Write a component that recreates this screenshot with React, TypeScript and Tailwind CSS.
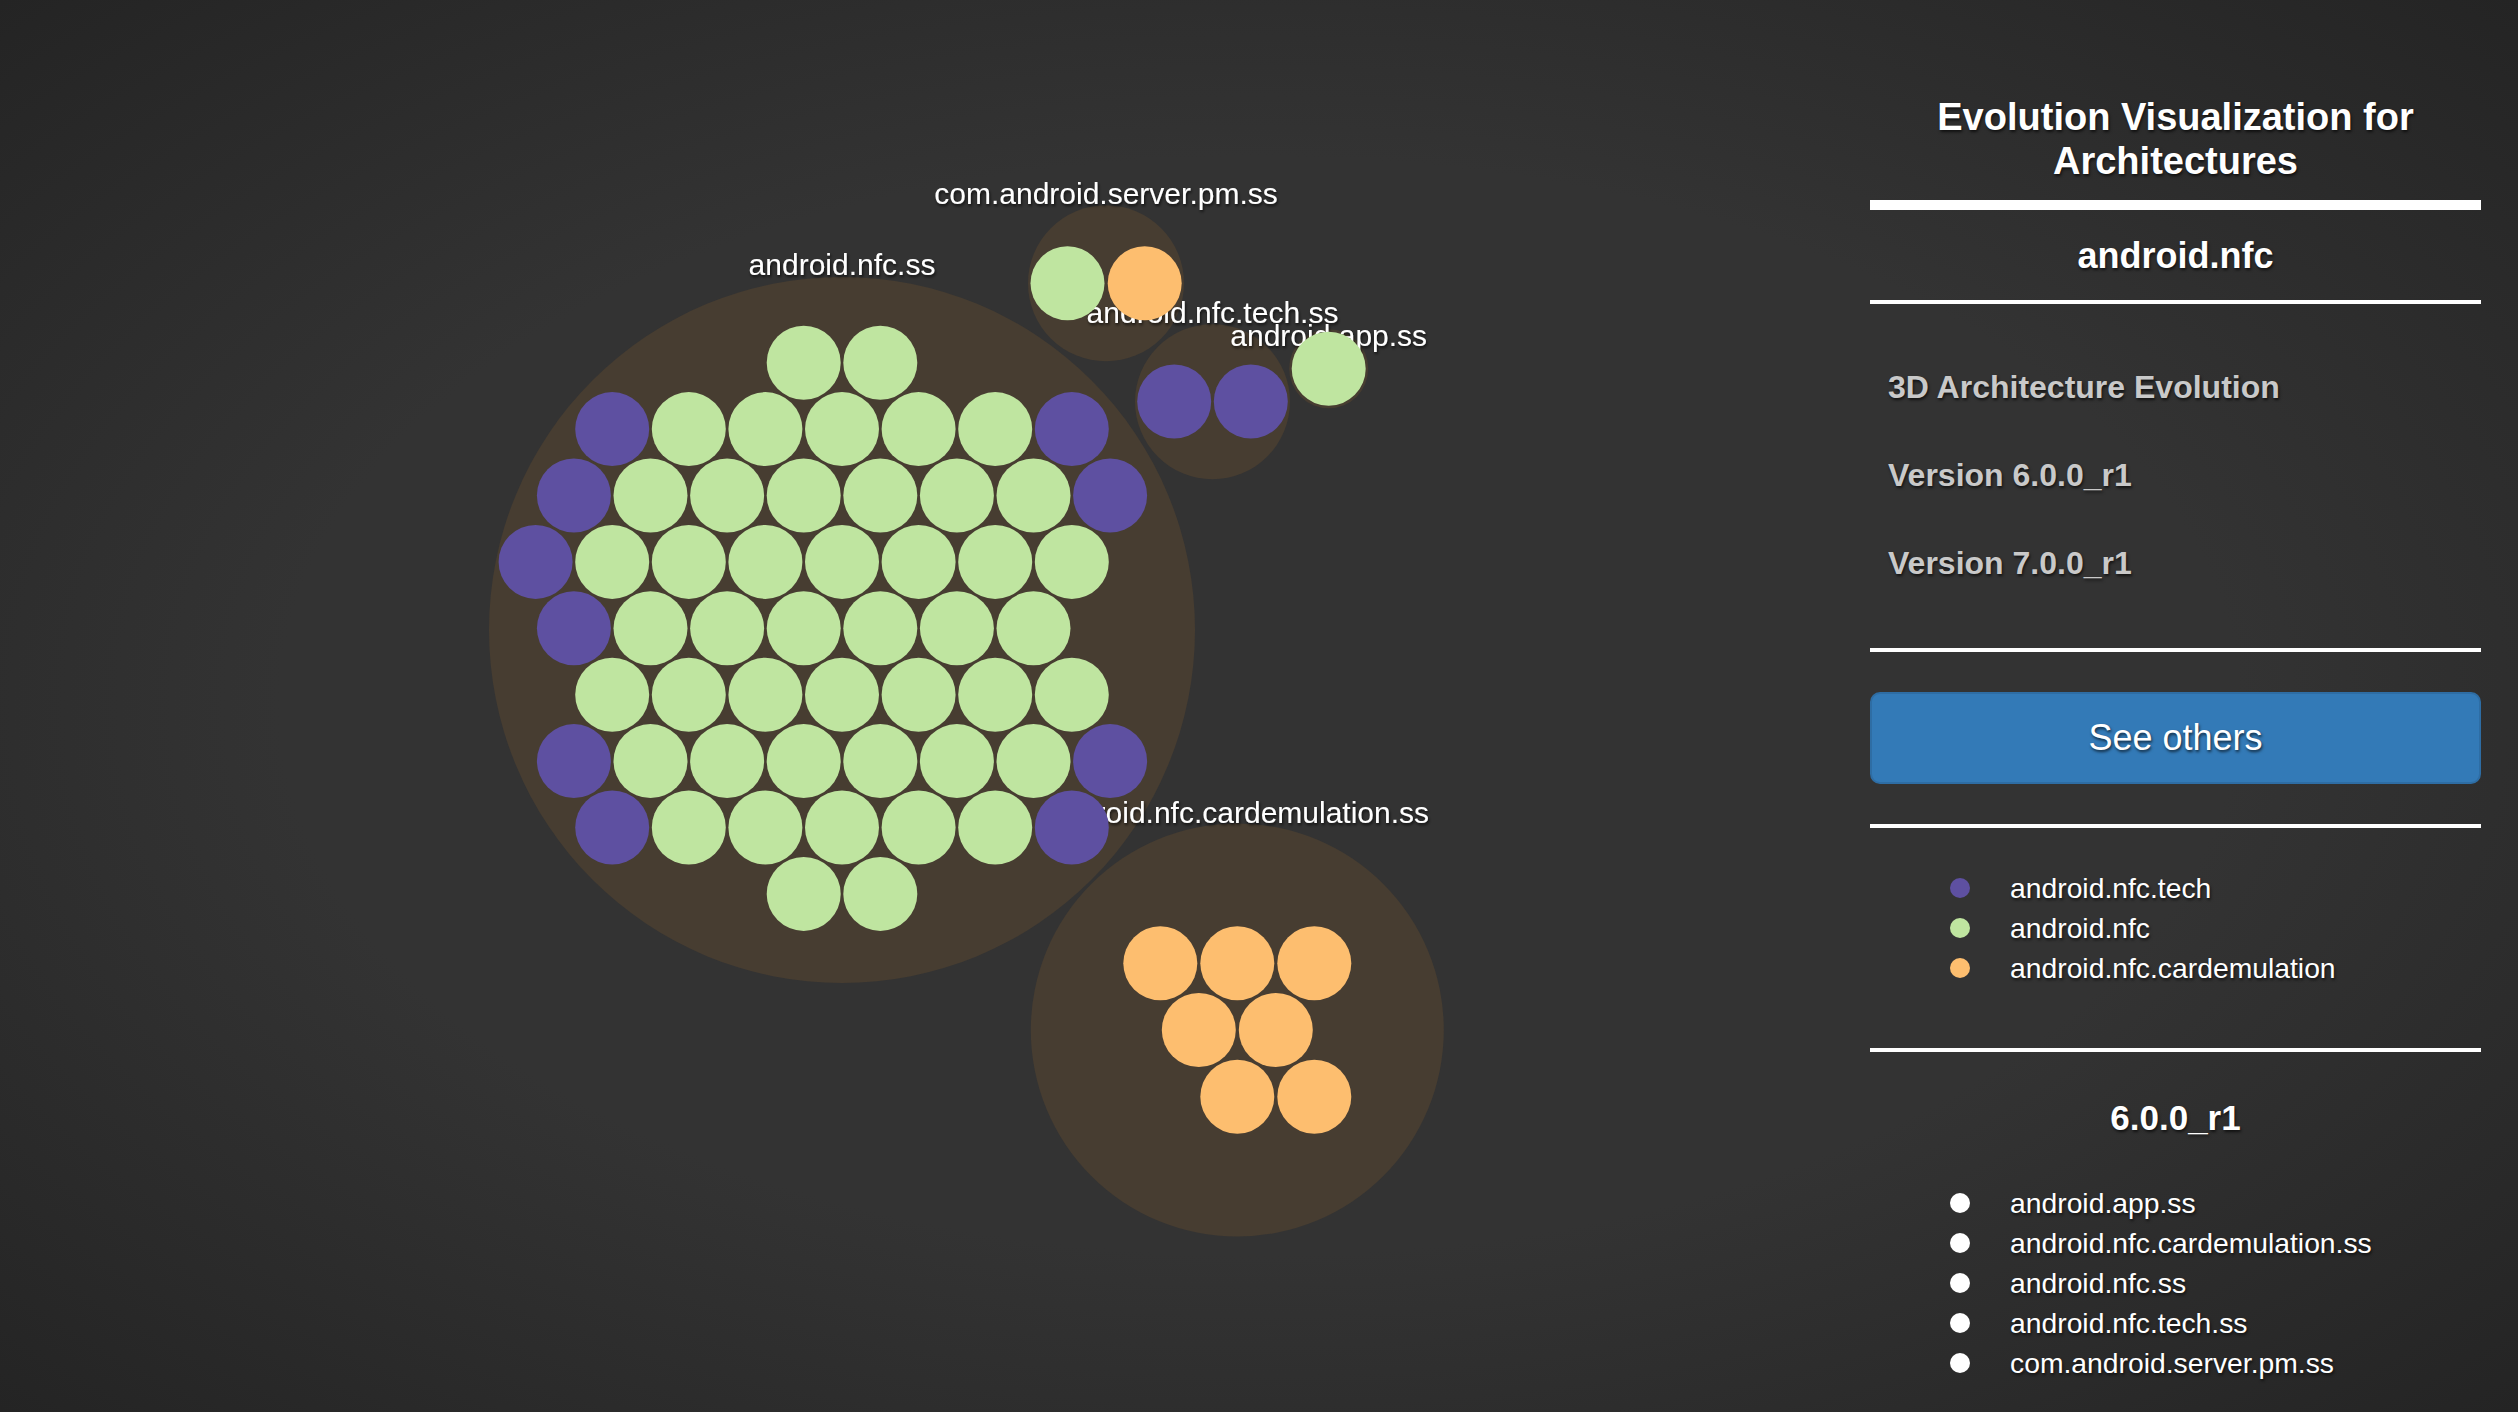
const GREEN = "#bfe5a0";
const PURPLE = "#5e50a1";
const ORANGE = "#fdbe6f";
const GROUP = "#473d31";
const R = 37;

type Leaf = { x: number; y: number; c: string };

// android.nfc.ss is packed on a hex lattice: [row, columns (half steps), purple columns]
const CX = 842;
const CY = 628.3;
const HX = 38.3;
const DY = 66.4;
const nfcRows: [number, number[], number[]][] = [
  [-4, [-1, 1], []],
  [-3, [-6, -4, -2, 0, 2, 4, 6], [-6, 6]],
  [-2, [-7, -5, -3, -1, 1, 3, 5, 7], [-7, 7]],
  [-1, [-8, -6, -4, -2, 0, 2, 4, 6], [-8]],
  [0, [-7, -5, -3, -1, 1, 3, 5], [-7]],
  [1, [-6, -4, -2, 0, 2, 4, 6], []],
  [2, [-7, -5, -3, -1, 1, 3, 5, 7], [-7, 7]],
  [3, [-6, -4, -2, 0, 2, 4, 6], [-6, 6]],
  [4, [-1, 1], []],
];

const leaves: Leaf[] = [
  ...nfcRows.flatMap(([j, ks, purple]) =>
    ks.map((k) => ({ x: CX + k * HX, y: CY + j * DY, c: purple.includes(k) ? PURPLE : GREEN }))
  ),
  { x: 1067.5, y: 283.3, c: GREEN },
  { x: 1144.7, y: 283.3, c: ORANGE },
  { x: 1174.2, y: 401.5, c: PURPLE },
  { x: 1250.8, y: 401.5, c: PURPLE },
  { x: 1328.7, y: 368.7, c: GREEN },
  { x: 1160.3, y: 963.3, c: ORANGE },
  { x: 1237.3, y: 963.3, c: ORANGE },
  { x: 1314.3, y: 963.3, c: ORANGE },
  { x: 1198.8, y: 1030, c: ORANGE },
  { x: 1275.8, y: 1030, c: ORANGE },
  { x: 1237.3, y: 1096.7, c: ORANGE },
  { x: 1314.3, y: 1096.7, c: ORANGE },
];

const groups = [
  { x: 842, y: 630, r: 353, label: "android.nfc.ss", ly: 275 },
  { x: 1106, y: 283.3, r: 78, label: "com.android.server.pm.ss", ly: 204 },
  { x: 1212.5, y: 401.7, r: 77.5, label: "android.nfc.tech.ss", ly: 323 },
  { x: 1328.7, y: 368.7, r: 39.5, label: "android.app.ss", ly: 346 },
  { x: 1237.3, y: 1030, r: 206.5, label: "android.nfc.cardemulation.ss", ly: 823 },
];

const legend = [
  { name: "android.nfc.tech", color: "bg-[#5e50a1]" },
  { name: "android.nfc", color: "bg-[#bfe5a0]" },
  { name: "android.nfc.cardemulation", color: "bg-[#fdbe6f]" },
];

const packages = [
  "android.app.ss",
  "android.nfc.cardemulation.ss",
  "android.nfc.ss",
  "android.nfc.tech.ss",
  "com.android.server.pm.ss",
];

const shadow = "[text-shadow:1px_2px_3px_rgba(0,0,0,0.65)]";

function BubbleChart() {
  return (
    <svg width={1870} height={1412} viewBox="0 0 1870 1412" className="block">
      <defs>
        <filter id="label-shadow" x="-10%" y="-30%" width="120%" height="160%">
          <feDropShadow dx="1" dy="2" stdDeviation="1.5" floodColor="#000" floodOpacity="0.7" />
        </filter>
      </defs>
      {groups.map((g) => (
        <circle key={g.label} cx={g.x} cy={g.y} r={g.r} fill={GROUP} />
      ))}
      {groups.map((g) => (
        <text
          key={g.label}
          x={g.x}
          y={g.ly}
          textAnchor="middle"
          fill="#fff"
          fontSize={30}
          filter="url(#label-shadow)"
        >
          {g.label}
        </text>
      ))}
      {leaves.map((l, i) => (
        <circle key={i} cx={l.x} cy={l.y} r={R} fill={l.c} />
      ))}
    </svg>
  );
}

export default function App() {
  return (
    <div className="flex h-[1412px] w-full overflow-hidden bg-[radial-gradient(ellipse_farthest-corner_at_center,#333333_55%,#242424_100%)] font-['Liberation_Sans',Arial,sans-serif] text-white">
      {/* Chart */}
      <div className="relative flex-1">
        <BubbleChart />
      </div>

      {/* Side panel */}
      <aside className="mr-[37px] w-[611px] shrink-0 pt-[95px]">
        <h1 className={`text-center text-[38px] font-bold leading-[44px] ${shadow}`}>
          Evolution Visualization for Architectures
        </h1>
        <div className="mt-[17px] h-[10px] bg-white" />

        <h2 className={`mt-[26px] text-center text-[36px] font-bold leading-[40px] ${shadow}`}>
          android.nfc
        </h2>
        <div className="mt-[24px] h-[4px] bg-white" />

        <ul className="mt-[63px] flex flex-col gap-[48px] pl-[18px]">
          {["3D Architecture Evolution", "Version 6.0.0_r1", "Version 7.0.0_r1"].map((t) => (
            <li key={t} className={`text-[32px] font-bold leading-[40px] text-[#c9c9c9] ${shadow}`}>
              {t}
            </li>
          ))}
        </ul>
        <div className="mt-[65px] h-[4px] bg-white" />

        <button className="mt-[40px] flex h-[92px] w-full items-center justify-center rounded-[10px] border-2 border-[#2e6da4] bg-[#337ab7] text-[36px] leading-[40px] text-white">
          <span className={shadow}>See others</span>
        </button>
        <div className="mt-[40px] h-[4px] bg-white" />

        <ul className="mt-[40px] flex flex-col pl-[80px]">
          {legend.map((l) => (
            <li key={l.name} className="flex h-[40px] items-center gap-[40px]">
              <span className={`h-5 w-5 shrink-0 rounded-full ${l.color}`} />
              <span className={`text-[28.3px] leading-[40px] ${shadow}`}>{l.name}</span>
            </li>
          ))}
        </ul>
        <div className="mt-[60px] h-[4px] bg-white" />

        <h2 className={`mt-[46px] text-center text-[35px] font-bold leading-[40px] ${shadow}`}>
          6.0.0_r1
        </h2>
        <ul className="mt-[45px] flex flex-col pl-[80px]">
          {packages.map((p) => (
            <li key={p} className="flex h-[40px] items-center gap-[40px]">
              <span className="h-5 w-5 shrink-0 rounded-full bg-white" />
              <span className={`text-[28.3px] leading-[40px] ${shadow}`}>{p}</span>
            </li>
          ))}
        </ul>
      </aside>
    </div>
  );
}
